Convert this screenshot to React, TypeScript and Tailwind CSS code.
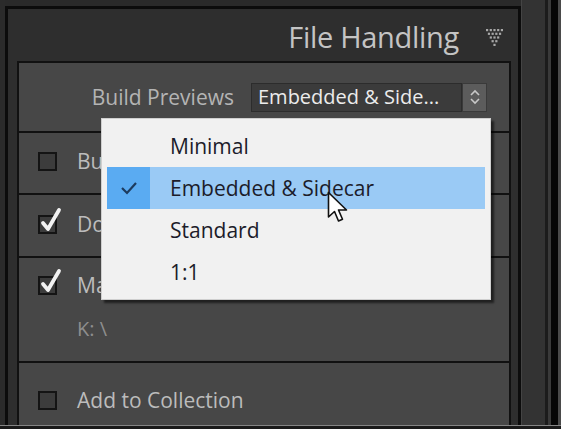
import React from 'react'

const font = { fontFamily: '"Open Sans", "Noto Sans", sans-serif' }

const Checkbox = ({ checked }: { checked?: boolean }) => (
  <div className="relative w-[19px] h-[19px] shrink-0 border-2 border-[#141414] bg-[#3c3c3c]">
    {checked && (
      <svg className="absolute left-[0px] top-[-10px]" width="22" height="27" viewBox="0 0 22 27">
        <path d="M3 16 L8 22 L19 3" fill="none" stroke="#f2f2f2" strokeWidth="3.8" strokeLinecap="round" strokeLinejoin="round" />
      </svg>
    )}
  </div>
)

// hidden: label runs under the open menu, so only its start shows
const Row = ({ label, checked, hidden }: { label: string; checked?: boolean; hidden?: boolean }) => (
  <div className="flex items-center gap-[20px]">
    <Checkbox checked={checked} />
    <span
      className={
        'text-[21px] text-[#bcbcbc] whitespace-nowrap leading-none ' +
        (hidden ? 'w-[24px] overflow-hidden' : '')
      }
    >
      {label}
    </span>
  </div>
)

const DotTriangle = () => {
  const rows = [5, 4, 3, 2, 1]
  return (
    <svg width="20" height="20" viewBox="0 0 20 20">
      {rows.map((n, r) =>
        Array.from({ length: n }).map((_, i) => (
          <rect
            key={r + '-' + i}
            x={1 + r * 1.85 + i * 3.7}
            y={1 + r * 3.7}
            width="2.2"
            height="2.2"
            fill="#a8a8a8"
          />
        ))
      )}
    </svg>
  )
}

const menuItems = ['Minimal', 'Embedded & Sidecar', 'Standard', '1:1']

export default function App() {
  return (
    <div className="relative w-[561px] h-[429px] overflow-hidden bg-[#2a2a2a]" style={font}>
      <div className="flex h-[425px]">
        {/* left strip */}
        <div className="w-[5px] bg-[#2b2b2b]" />

        {/* main panel */}
        <div className="w-[516px] mt-[6px] border-t-[3px] border-l-[3px] border-r-[3px] border-[#0c0c0c] bg-[#2e2e2e] flex flex-col pl-[9px] pr-[7px]">
          <div className="h-[52px] flex items-center justify-end pr-[6px] gap-[26px] pt-[2px]">
            <span className="text-[29px] text-[#c4c4c4] leading-none tracking-[-0.3px]">File Handling</span>
            <div className="pt-[4px]">
              <DotTriangle />
            </div>
          </div>

          <div className="flex-1 border-l-2 border-r-2 border-[#111] bg-[#474747] flex flex-col">
            {/* build previews */}
            <div className="h-[70px] border-t-2 border-[#111] flex items-center justify-end pr-[22px]">
              <span className="text-[21px] text-[#b4b4b4] leading-none mr-[17px]">Build Previews</span>
              <div className="flex h-[29px]">
                <div className="w-[211px] bg-[#3b3b3b] border border-[#2c2c2c] flex items-center pl-[6px]">
                  <span className="text-[20px] text-[#ececec] leading-none whitespace-nowrap">Embedded &amp; Side...</span>
                </div>
                <div className="w-[25px] bg-[#5c5c5c] border border-[#3a3a3a] flex items-center justify-center">
                  <svg width="12" height="18" viewBox="0 0 12 18">
                    <path d="M2 7 L6 3 L10 7" fill="none" stroke="#c8c8c8" strokeWidth="1.6" />
                    <path d="M2 11 L6 15 L10 11" fill="none" stroke="#c8c8c8" strokeWidth="1.6" />
                  </svg>
                </div>
              </div>
            </div>

            <div className="h-[62px] border-t-2 border-[#111] flex items-center pl-[19px] pb-[3px]">
              <Row label="Build Smart Previews" hidden />
            </div>
            <div className="h-[63px] border-t-2 border-[#111] flex items-center pl-[19px] pb-[3px]">
              <Row label="Don't Import Suspected Duplicates" checked hidden />
            </div>
            <div className="h-[105px] border-t-2 border-[#111] flex flex-col items-start pl-[19px] pt-[17px]">
              <Row label="Make a Second Copy To:" checked hidden />
              <span className="ml-[39px] mt-[23px] text-[20px] text-[#8e8e8e] leading-none">K: \</span>
            </div>
            <div className="flex-1 border-t-2 border-[#111] flex items-start pl-[19px] pt-[27px]">
              <Row label="Add to Collection" />
            </div>
          </div>
        </div>

        {/* right strips */}
        <div className="w-[24px] bg-[#333] border-l border-[#444]" />
        <div className="w-[3px] bg-[#1c1c1c]" />
        <div className="w-[3px] bg-[#3a3a3a]" />
        <div className="w-[7px] bg-[#060606]" />
        <div className="w-[3px] bg-[#4a4a4a]" />
      </div>
      <div className="h-[1px] bg-[#858585]" />
      <div className="h-[3px] bg-[#1a1a1a]" />

      {/* dropdown menu */}
      <div className="absolute left-[101px] top-[118px] w-[390px] h-[182px] bg-[#f1f1f1] border border-[#cfcfcf] shadow-[3px_3px_2px_rgba(0,0,0,0.55)] pt-[6px] px-[5px]">
        {menuItems.map((item) => {
          const active = item === 'Embedded & Sidecar'
          return (
            <div key={item} className={'flex h-[42px] items-center ' + (active ? 'bg-[#9acaf5]' : '')}>
              <div className={'w-[43px] h-full flex items-center justify-center ' + (active ? 'bg-[#5aabf2]' : '')}>
                {active && (
                  <svg width="18" height="14" viewBox="0 0 18 14">
                    <path d="M2 7 L7 12 L16 2" fill="none" stroke="#1d3b5e" strokeWidth="2.2" />
                  </svg>
                )}
              </div>
              <span className="ml-[20px] text-[21px] text-[#1c1c2a] leading-none whitespace-nowrap">{item}</span>
            </div>
          )
        })}
      </div>

      {/* cursor */}
      <svg className="absolute left-[327px] top-[191px]" width="22" height="34" viewBox="0 0 22 34">
        <path
          d="M1.5 1.5 L1.5 26 L7.5 20.5 L11.5 30 L15.5 28.2 L11.5 19 L19.5 19 Z"
          fill="#ffffff"
          stroke="#111"
          strokeWidth="1.6"
          strokeLinejoin="round"
        />
      </svg>
    </div>
  )
}
